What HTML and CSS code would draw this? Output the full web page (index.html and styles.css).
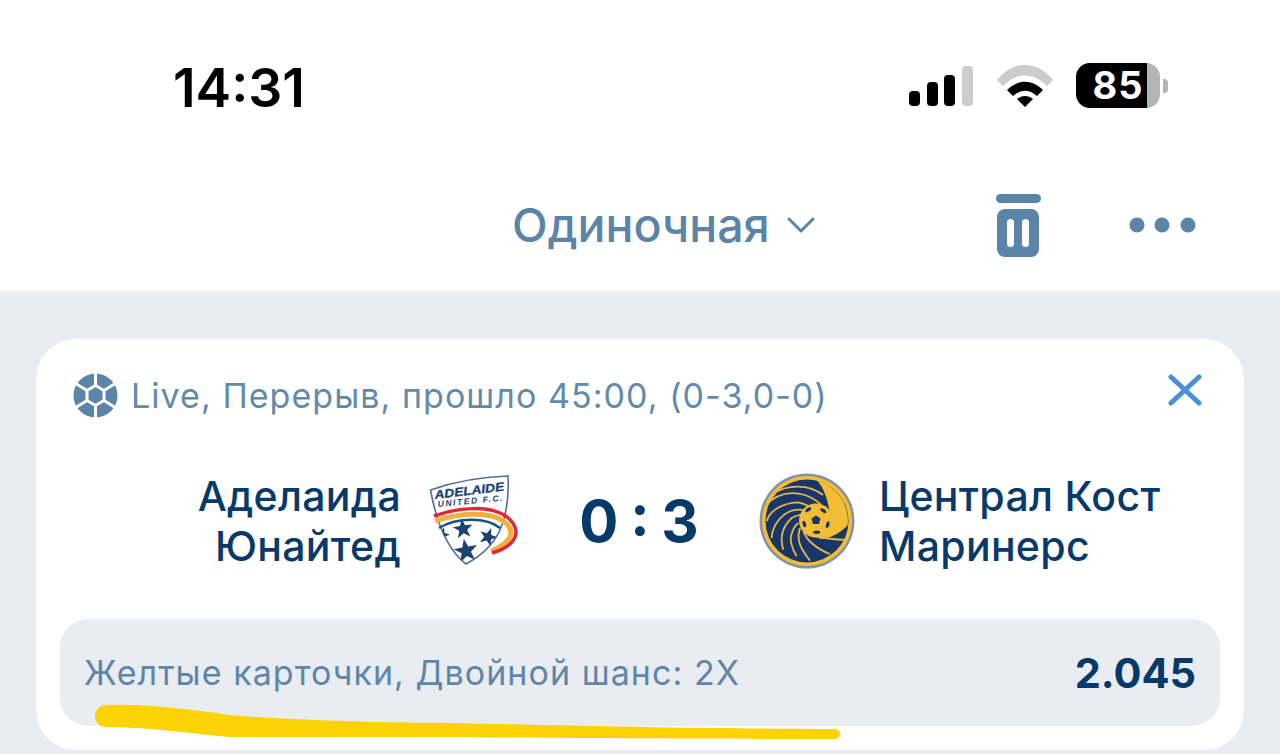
FILE: index.html
```html
<!DOCTYPE html>
<html lang="ru">
<head>
    <meta charset="UTF-8">
    <meta name="viewport" content="width=device-width, initial-scale=1.0">
    <title>Одиночная</title>
    <link rel="stylesheet" href="styles.css">
</head>
<body>
    <div class="status-bar">
        <div class="time">14:31</div>
        <div class="status-icons">
            <svg class="signal" width="64" height="40" viewBox="0 0 64 40">
                <rect x="0" y="25" width="11" height="15" rx="4" fill="#000"/>
                <rect x="18" y="16" width="11" height="24" rx="4" fill="#000"/>
                <rect x="35" y="9" width="11" height="31" rx="4" fill="#000"/>
                <rect x="53" y="0" width="11" height="40" rx="4" fill="#ccc"/>
            </svg>
            <svg class="wifi" width="56" height="42" viewBox="0 0 56 42">
                <path d="M0 15 C16 -5 40 -5 56 15 L50 21 C36 7 20 7 6 21 Z" fill="#ccc"/>
                <path d="M10 25 C21 14 35 14 46 25 L40 31 C32 24 24 24 16 31 Z" fill="#000"/>
                <path d="M20 34 C25 30 31 30 36 34 L28 42 Z" fill="#000"/>
            </svg>
            <div class="battery">
                <div class="battery-body"><span class="battery-level">85</span></div>
                <div class="battery-cap"></div>
            </div>
        </div>
    </div>

    <div class="nav-bar">
        <div class="bet-type">Одиночная
            <svg width="28" height="16" viewBox="0 0 28 16"><path d="M2 2 L14 14 L26 2" fill="none" stroke="#5a84a8" stroke-width="3" stroke-linecap="round" stroke-linejoin="round"/></svg>
        </div>
        <svg class="trash" width="46" height="63" viewBox="0 0 46 63">
            <rect x="0" y="0" width="45" height="9" rx="4.5" fill="#5a84a8"/>
            <rect x="1" y="15" width="42" height="48" rx="8" fill="#5a84a8"/>
            <rect x="11" y="25" width="7" height="28" rx="3.5" fill="#fff"/>
            <rect x="26" y="25" width="7" height="28" rx="3.5" fill="#fff"/>
        </svg>
        <svg class="dots" width="68" height="16" viewBox="0 0 68 16">
            <circle cx="8" cy="8" r="7.5" fill="#5a84a8"/>
            <circle cx="33" cy="8" r="7.5" fill="#5a84a8"/>
            <circle cx="59" cy="8" r="7.5" fill="#5a84a8"/>
        </svg>
    </div>

    <div class="content">
        <div class="card">
            <div class="card-head">
                <svg class="ball" width="45" height="45" viewBox="0 0 45 45">
                    <circle cx="22.5" cy="22.5" r="22" fill="#5a84a8"/>
                    <g fill="none" stroke="#fff" stroke-width="3">
                        <path d="M22.5 12.5 L31 17.5 V27.5 L22.5 32.5 L14 27.5 V17.5 Z"/>
                        <path d="M22.5 12.5 V0 M31 17.5 L43 10 M31 27.5 L43 35 M22.5 32.5 V45 M14 27.5 L2 35 M14 17.5 L2 10"/>
                    </g>
                </svg>
                <div class="match-info">Live, Перерыв, прошло 45:00, (0-3,0-0)</div>
                <svg class="close" width="34" height="32" viewBox="0 0 34 32"><path d="M3 3 L31 29 M31 3 L3 29" fill="none" stroke="#4a8fd8" stroke-width="5" stroke-linecap="round"/></svg>
            </div>

            <div class="match">
                <div class="team team-left">
                    <div class="team-name">Аделаида<br>Юнайтед</div>
                    <svg class="crest" width="90" height="92" viewBox="0 0 90 92">
                        <defs>
                            <polygon id="star" points="0,-10 2.4,-3.2 9.5,-3.1 3.8,1.2 5.9,8.1 0,4 -5.9,8.1 -3.8,1.2 -9.5,-3.1 -2.4,-3.2"/>
                            <clipPath id="shield-clip"><path d="M1.5 15 C24 7 50 2 79 1 C80 20 78 36 73 50 C66 70 50 82 37 89 C20 76 8 50 1.5 15 Z"/></clipPath>
                        </defs>
                        <path d="M1.5 15 C24 7 50 2 79 1 C80 20 78 36 73 50 C66 70 50 82 37 89 C20 76 8 50 1.5 15 Z" fill="#fff" stroke="#4f6f94" stroke-width="1.6"/>
                        <text x="6" y="24" class="crest-top" textLength="70" lengthAdjust="spacingAndGlyphs" transform="rotate(-7 6 24)">ADELAIDE</text>
                        <text x="9" y="32" class="crest-sub" textLength="65" transform="rotate(-5.5 9 32)">UNITED F.C.</text>
                        <g clip-path="url(#shield-clip)" fill="#1c4272">
                            <use href="#star" transform="translate(34 54) rotate(-8) scale(1.05)"/>
                            <use href="#star" transform="translate(59 62) rotate(20) scale(.95)"/>
                            <use href="#star" transform="translate(37 76) rotate(-10) scale(1.25)"/>
                            <use href="#star" transform="translate(13 60) rotate(15) scale(.8)"/>
                        </g>
                        <path d="M10 53 C28 42 58 42 71 53" fill="none" stroke="#1c4e8a" stroke-width="2.5"/>
                        <path d="M62 76 C68 74 74 70 78 66 C84 60 83 52 74 46 C60 36 30 38 6 46" fill="none" stroke="#f2b03f" stroke-width="5"/>
                        <path d="M63 78 C70 76 78 72 82 68 C90 60 88 50 78 42 C62 30 30 32 5 41" fill="none" stroke="#e3263c" stroke-width="3.5"/>
                    </svg>
                </div>
                <div class="score">0 : 3</div>
                <div class="team team-right">
                    <svg class="crest" width="96" height="96" viewBox="0 0 96 96">
                        <circle cx="48" cy="48" r="47.5" fill="#8492a8"/>
                        <circle cx="48" cy="48" r="45" fill="#f3bd36"/>
                        <circle cx="48" cy="48" r="41.5" fill="#1a3567"/>
                        <path d="M58 7.5 C64 14 68 24 70 36 L74 47 L60 66 C70 66 82 60 88.7 52 A41.5 41.5 0 0 0 58 7.5 Z" fill="#f3bd36"/>
                        <g fill="none" stroke="#e2b64a" stroke-width="1.8">
                            <path d="M14 21 C28 11 50 11 64 22"/>
                            <path d="M6 33 C18 20 32 18 46 22 C54 25 60 29 64 34"/>
                            <path d="M7.7 48 C11 37 24 30 39 29.3 C44 30 48 32 51 34.3"/>
                            <path d="M12.7 65 C13 54 21 42 32.7 37.7 C37 36.5 42 36.5 46 37.2"/>
                            <path d="M24.3 76.7 C21 66 22 55 32.7 45 C36 43 40 42 42.7 41.7"/>
                            <path d="M37.7 83.3 C33 76 30 66 33 60 C34 56 37 52 39.3 50"/>
                            <path d="M51 87.7 C45 80 41 74 40 68 C39 63 40 58 41 55"/>
                            <path d="M71 81 C63 78 57 74 52.7 70 C49 67 46 62 44.3 58.3"/>
                            <path d="M86 66.7 C78 67 72 66 66 65 C60 64 55 63 51 61.7"/>
                        </g>
                        <circle cx="57" cy="47.5" r="17" fill="#f3bd36"/>
                        <g fill="#1a3567">
                            <polygon points="57,42.5 61.5,45.5 60,51 54,51 52.5,45.5"/>
                            <ellipse cx="49.3" cy="36.7" rx="3.4" ry="1.7" transform="rotate(-35 49.3 36.7)"/>
                            <ellipse cx="64.3" cy="37.7" rx="3.4" ry="1.7" transform="rotate(35 64.3 37.7)"/>
                            <ellipse cx="68.7" cy="51.7" rx="1.7" ry="3.4" transform="rotate(15 68.7 51.7)"/>
                            <ellipse cx="57.7" cy="59.3" rx="3.6" ry="1.7"/>
                            <ellipse cx="45.3" cy="51" rx="1.7" ry="3.4" transform="rotate(-15 45.3 51)"/>
                        </g>
                    </svg>
                    <div class="team-name">Централ Кост<br>Маринерс</div>
                </div>
            </div>

            <div class="bet-row">
                <div class="bet-name">Желтые карточки, Двойной шанс: 2Х</div>
                <div class="bet-odds">2.045</div>
            </div>

            <svg class="scribble" width="760" height="46" viewBox="0 0 760 46">
                <path d="M20 10 C50 9 90 12 144 20 C200 25 300 28 364 28 C500 31 650 34 749 34 A5 5 0 0 1 749 44 C600 44 450 43 364 42 C280 42 200 42 144 42 C100 38 60 32 20 32 A11 11 0 0 1 20 10 Z" fill="#fdd305"/>
            </svg>
        </div>
    </div>
</body>
</html>
```

FILE: styles.css
```css
html, body {
    margin: 0;
    padding: 0;
    height: 754px;
    overflow: hidden;
}
body {
    font-family: 'Inter', 'Liberation Sans', sans-serif;
    background-color: #fff;
    display: flex;
    flex-direction: column;
}
.status-bar {
    height: 175px;
    display: flex;
    justify-content: space-between;
    align-items: center;
    padding: 0 112px 0 173px;
    flex-shrink: 0;
}
.time {
    font-size: 53.5px;
    font-weight: 600;
    color: #000;
    line-height: 1;
}
.status-icons {
    display: flex;
    align-items: center;
    gap: 23px;
    margin-bottom: 4px;
}
.signal {
    margin-right: 1px;
}
.battery {
    display: flex;
    align-items: center;
    gap: 3px;
}
.battery-body {
    width: 84px;
    height: 45px;
    border-radius: 14px;
    background: linear-gradient(to right, #000 85%, #b4b4b4 85%);
}
.battery-level {
    display: block;
    text-align: center;
    font-size: 38px;
    font-weight: 700;
    letter-spacing: 1px;
    line-height: 45px;
    color: #fff;
}
.battery-cap {
    width: 5px;
    height: 14px;
    border-radius: 0 4px 4px 0;
    background: #b4b4b4;
}
.nav-bar {
    height: 100px;
    padding-bottom: 16px;
    display: flex;
    align-items: center;
    flex-shrink: 0;
    padding-left: 512px;
}
.bet-type {
    display: flex;
    align-items: center;
    gap: 17px;
    font-size: 46.5px;
    font-weight: 500;
    color: #5a84a8;
    width: 484px;
}
.dots {
    margin-left: 87px;
}
.content {
    flex: 1;
    background: #e9edf2;
    padding: 48px 36px 0;
}
.card {
    position: relative;
    background: #fff;
    border-radius: 40px;
    height: 411px;
    box-sizing: border-box;
    padding: 34px 24px 24px;
    display: flex;
    flex-direction: column;
}
.card-head {
    display: flex;
    align-items: center;
    padding: 0 18px 0 13px;
    height: 45px;
}
.match-info {
    margin-left: 13px;
    flex: 1;
    font-size: 34px;
    letter-spacing: 1.05px;
    color: #648aab;
}
.close {
    margin-bottom: 12px;
}
.match {
    flex: 1;
    display: flex;
    align-items: center;
    padding-top: 4px;
}
.team {
    width: 459px;
    display: flex;
    align-items: center;
    gap: 28px;
}
.team-left {
    justify-content: flex-end;
    text-align: right;
}
.team-right {
    width: 461px;
    gap: 24px;
}
.team-name {
    font-size: 41px;
    font-weight: 500;
    letter-spacing: 0.3px;
    line-height: 50px;
    color: #08396b;
}
.crest-top {
    font-family: 'Liberation Sans', sans-serif;
    font-size: 12px;
    font-weight: 700;
    font-style: italic;
    fill: #1c4272;
    stroke: #1c4272;
    stroke-width: 0.3px;
}
.crest-sub {
    font-family: 'Liberation Sans', sans-serif;
    font-size: 8.5px;
    font-weight: 700;
    font-style: italic;
    fill: #1c4272;
}
.score {
    flex: 1;
    text-align: center;
    font-size: 58px;
    font-weight: 700;
    word-spacing: -2px;
    color: #08396b;
}
.bet-row {
    height: 107px;
    flex-shrink: 0;
    box-sizing: border-box;
    padding: 0 24px;
    border-radius: 28px;
    background: #e9edf2;
    display: flex;
    justify-content: space-between;
    align-items: center;
}
.bet-name {
    font-size: 34px;
    letter-spacing: 1.05px;
    color: #5f86a8;
}
.bet-odds {
    font-size: 41.5px;
    font-weight: 700;
    color: #08396b;
}
.scribble {
    position: absolute;
    left: 50px;
    top: 356px;
}
```
